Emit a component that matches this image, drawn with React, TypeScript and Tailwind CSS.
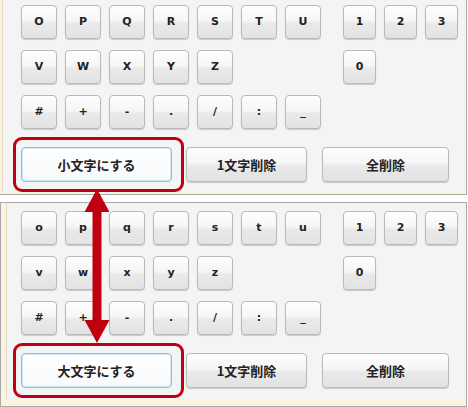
import React from 'react';

const jp = { fontFamily: '"Noto Sans CJK JP", "DejaVu Sans", sans-serif' };

const Key = ({ label, narrow }: { label: string; narrow?: boolean }) => (
  <div
    className={`${narrow ? 'w-[33px]' : 'w-[36px]'} h-[34px] flex items-center justify-center rounded-[4px] border border-[#b9b9b9] bg-[linear-gradient(#fefefe,#f6f6f6_45%,#e9e9e9_55%,#e3e3e3)] shadow-[0_1px_1px_rgba(0,0,0,0.18)] text-[11px] font-bold text-[#222]`}
    style={{ fontFamily: '"DejaVu Sans", Verdana, sans-serif' }}
  >
    {label}
  </div>
);

const WideButton = ({ label, width, active }: { label: string; width: string; active?: boolean }) => (
  <div
    className={`${width} h-[35px] flex items-center justify-center rounded-[4px] border text-[13px] font-bold text-[#222] ${
      active
        ? 'border-[#84c2e6] bg-[linear-gradient(#ffffff,#f7f9fb)] shadow-[inset_0_0_0_1px_#cfe8f7]'
        : 'border-[#b9b9b9] bg-[linear-gradient(#fefefe,#f5f5f5_45%,#e9e9e9_55%,#e2e2e2)] shadow-[0_1px_1px_rgba(0,0,0,0.18)]'
    }`}
    style={jp}
  >
    {label}
  </div>
);

const Keyboard = ({ upper }: { upper: boolean }) => {
  const c = (s: string) => (upper ? s : s.toLowerCase());
  const row1 = ['O', 'P', 'Q', 'R', 'S', 'T', 'U'].map(c);
  const row2 = ['V', 'W', 'X', 'Y', 'Z'].map(c);
  const row3 = ['#', '+', '-', '.', '/', ':', '_'];

  return (
    <div className="flex flex-col gap-[11px]">
      <div className="flex">
        <div className="w-[300px] flex gap-[8px]">
          {row1.map((k) => <Key key={k} label={k} />)}
        </div>
        <div className="ml-[22px] flex gap-[8px]">
          {['1', '2', '3'].map((k) => <Key key={k} label={k} narrow />)}
        </div>
      </div>
      <div className="flex">
        <div className="w-[300px] flex gap-[8px]">
          {row2.map((k) => <Key key={k} label={k} />)}
        </div>
        <div className="ml-[22px] flex gap-[8px]">
          <Key label="0" narrow />
        </div>
      </div>
      <div className="flex">
        <div className="w-[300px] flex gap-[8px]">
          {row3.map((k) => <Key key={k} label={k} />)}
        </div>
      </div>
      <div className="flex mt-[7px]">
        <WideButton label={upper ? '小文字にする' : '大文字にする'} width="w-[151px]" active />
        <div className="ml-[14px]">
          <WideButton label="1文字削除" width="w-[121px]" />
        </div>
        <div className="ml-[15px]">
          <WideButton label="全削除" width="w-[127px]" />
        </div>
      </div>
    </div>
  );
};

const App = () => {
  return (
    <div className="relative w-[468px] h-[407px] bg-white overflow-hidden">
      {/* top panel (upper case) */}
      <div className="w-[467px] h-[195px] flex flex-col bg-[#fbf3e2] border-r border-b border-[#a9a9a9]">
        <div className="ml-[2px] h-[191px] bg-[#f4f4f4] border-l border-[#e6dcc4] pl-[18px] pt-[5px]">
          <Keyboard upper />
        </div>
      </div>

      {/* bottom panel (lower case) */}
      <div className="mt-[7px] w-[467px] h-[205px] flex flex-col bg-[#fbf3e2] border border-[#a9a9a9]">
        <div className="ml-[5px] h-[196px] bg-[#f4f4f4] border-l border-[#e6dcc4] pl-[14px] pt-[8px]">
          <Keyboard upper={false} />
        </div>
      </div>

      {/* annotation outlines */}
      <div className="absolute left-[13px] top-[137px] w-[171px] h-[55px] rounded-[9px] border-[3px] border-[#c00010]" />
      <div className="absolute left-[13px] top-[343px] w-[171px] h-[55px] rounded-[9px] border-[3px] border-[#c00010]" />

      {/* double arrow */}
      <svg className="absolute left-[84px] top-[189px]" width="26" height="154" viewBox="0 0 26 154">
        <polygon points="13,0 25.5,23 0.5,23" fill="#c00010" />
        <rect x="8.5" y="22" width="9" height="110" fill="#c00010" />
        <polygon points="13,154 25.5,131 0.5,131" fill="#c00010" />
      </svg>
    </div>
  );
};

export default App;
